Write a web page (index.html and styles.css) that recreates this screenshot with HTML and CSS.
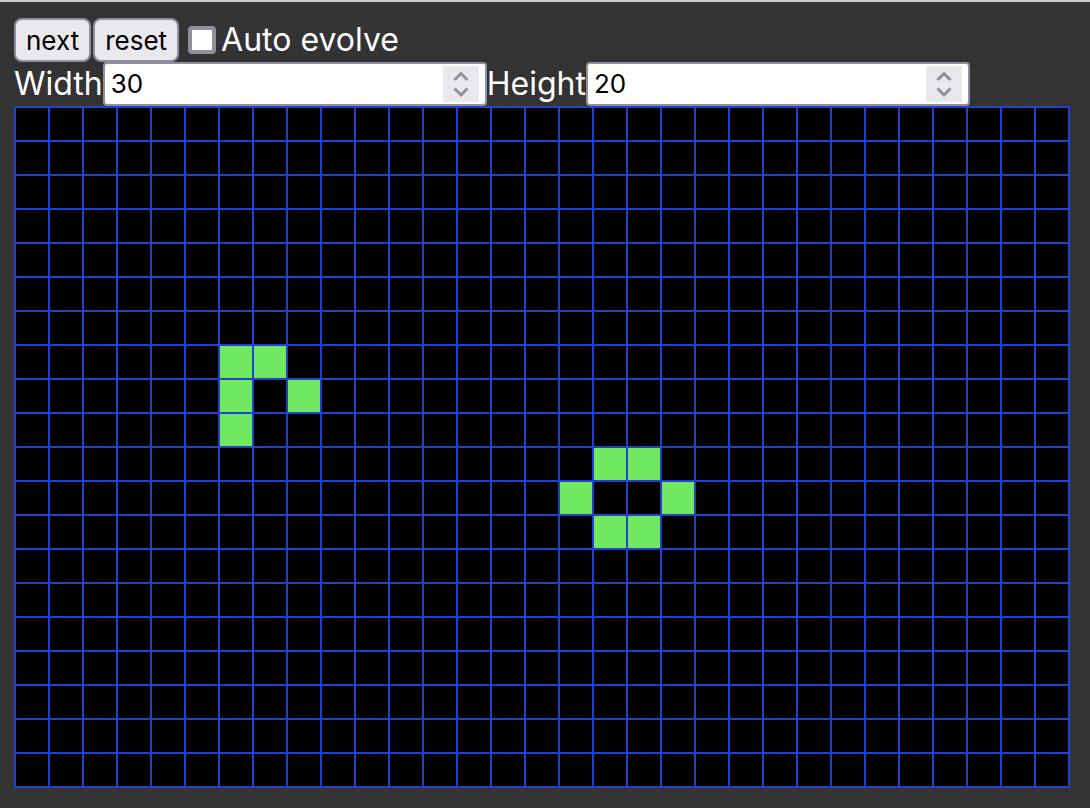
FILE: index.html
```
<!DOCTYPE html>
<html lang="en">
<head>
<meta charset="utf-8">
<title>Game of Life</title>
<link rel="stylesheet" href="styles.css">
</head>
<body>
<main class="app">
  <div class="row">
    <button class="button" type="button">next</button>
    <button class="button" type="button">reset</button>
    <input class="check" type="checkbox" id="auto">
    <label class="label" for="auto">Auto evolve</label>
  </div>
  <div class="row sizes">
    <label class="label" for="width">Width</label>
    <div class="field">
      <input class="number" type="number" id="width" value="30">
      <svg class="spinner" viewBox="0 0 36 36" aria-hidden="true"><path d="M11.5 14L18 7.5l6.500 6.500M11.500 22.500L18 29l6.500-6.500"/></svg>
    </div>
    <label class="label" for="height">Height</label>
    <div class="field">
      <input class="number" type="number" id="height" value="20">
      <svg class="spinner" viewBox="0 0 36 36" aria-hidden="true"><path d="M11.5 14L18 7.5l6.500 6.500M11.500 22.500L18 29l6.500-6.500"/></svg>
    </div>
  </div>
  <div class="board" id="board"></div>
</main>
<script src="board.js"></script>
</body>
</html>
```
FILE: styles.css
```
* {
  box-sizing: border-box;
}

body {
  margin: 0;
  background: #333;
  color: #fff;
  font-family: Inter, "Liberation Sans", sans-serif;
  font-size: 32px;
  line-height: 44px;
}

.app {
  border-top: 2px solid #cbcdcd;
  padding: 16px 14px 20px;
}

.row {
  display: flex;
  align-items: center;
  gap: 2px;
  height: 44px;
}

.sizes {
  gap: 0;
}

.label {
  white-space: nowrap;
  padding-bottom: 1px;
}

.button {
  height: 44px;
  padding: 2px 10px 0;
  border: 2px solid #8f8f9d;
  border-radius: 8px;
  background: #e9e9ed;
  color: #000;
  font: 26px/38px Inter, "Liberation Sans", sans-serif;
}

.check {
  appearance: none;
  width: 28px;
  height: 28px;
  margin: 0 3px 0 7px;
  border: 4px solid #8f8f9d;
  border-radius: 4px;
  background: #fff;
}

.check:checked {
  background: #1d3fcb;
}

.field {
  display: flex;
  align-items: center;
  flex: 0 1 384px;
  min-width: 0;
  height: 44px;
  padding: 0 6px;
  border: 2px solid #8f8f9d;
  border-radius: 4px;
  background: #fff;
}

.number {
  appearance: textfield;
  flex: 1;
  min-width: 0;
  height: 40px;
  padding: 0;
  border: 0;
  outline: 0;
  background: transparent;
  color: #000;
  font: 26px/40px Inter, "Liberation Sans", sans-serif;
}

.number::-webkit-inner-spin-button {
  appearance: none;
  margin: 0;
}

.spinner {
  width: 36px;
  height: 36px;
  background: #e9e9ed;
  fill: none;
  stroke: #8f8f9d;
  stroke-width: 3;
}

.board {
  display: grid;
  grid-template-columns: repeat(31, 32px);
  grid-auto-rows: 32px;
  gap: 2px;
  width: fit-content;
  padding: 2px;
  background: #1f43cf;
}

.cell {
  background: #000;
}

.alive {
  background: #70e85f;
}
```
FILE: board.js
```
const columns = 31;
const rows = 20;
const alive = new Set([
  "6,7", "7,7", "6,8", "8,8", "6,9",
  "17,10", "18,10", "16,11", "19,11", "17,12", "18,12"
]);
const board = document.getElementById("board");

for (let y = 0; y < rows; y++) {
  for (let x = 0; x < columns; x++) {
    const cell = document.createElement("div");
    cell.className = alive.has(x + "," + y) ? "cell alive" : "cell";
    cell.addEventListener("click", () => cell.classList.toggle("alive"));
    board.append(cell);
  }
}
```
